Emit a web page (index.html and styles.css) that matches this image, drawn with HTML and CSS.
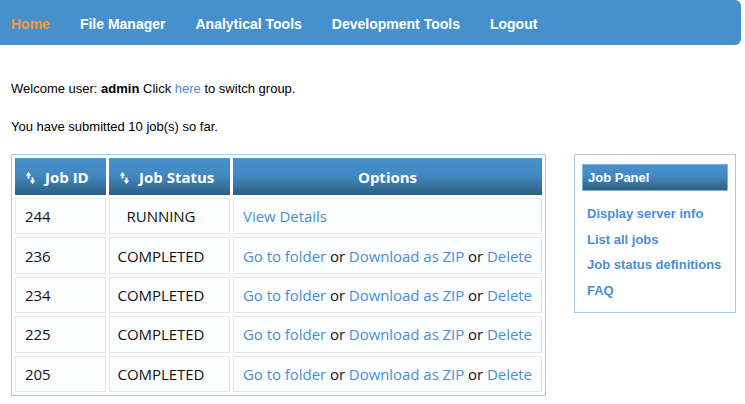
FILE: index.html
```html
<!DOCTYPE html>
<html>
<head>
<meta charset="utf-8">
<link rel="stylesheet" href="styles.css">
</head>
<body>
<nav class="topnav">
  <a class="nav-item active" href="#">Home</a>
  <a class="nav-item" href="#">File Manager</a>
  <a class="nav-item" href="#">Analytical Tools</a>
  <a class="nav-item" href="#">Development Tools</a>
  <a class="nav-item" href="#">Logout</a>
</nav>
<div class="content">
  <p class="welcome">Welcome user: <b>admin</b> Click <a href="#">here</a> to switch group.</p>
  <p class="submitted">You have submitted 10 job(s) so far.</p>
  <div class="main">
    <table class="jobs">
      <thead>
        <tr>
          <th class="col-id"><svg class="sort" width="9" height="12" viewBox="0 0 9 12"><path d="M2.5 0 L5.2 3.4 L3.5 3.4 L3.5 6.5 L1.5 6.5 L1.5 3.4 L-0.2 3.4 Z" fill="#fff"/><path d="M6.5 12 L9.2 8.6 L7.5 8.6 L7.5 5.5 L5.5 5.5 L5.5 8.6 L3.8 8.6 Z" fill="#fff"/></svg>Job ID</th>
          <th class="col-status"><svg class="sort" width="9" height="12" viewBox="0 0 9 12"><path d="M2.5 0 L5.2 3.4 L3.5 3.4 L3.5 6.5 L1.5 6.5 L1.5 3.4 L-0.2 3.4 Z" fill="#fff"/><path d="M6.5 12 L9.2 8.6 L7.5 8.6 L7.5 5.5 L5.5 5.5 L5.5 8.6 L3.8 8.6 Z" fill="#fff"/></svg>Job Status</th>
          <th class="col-opt">Options</th>
        </tr>
      </thead>
      <tbody>
        <tr><td>244</td><td class="status">RUNNING</td><td><a href="#">View Details</a></td></tr>
        <tr><td>236</td><td class="status">COMPLETED</td><td><a href="#">Go to folder</a> or <a href="#">Download as ZIP</a> or <a href="#">Delete</a></td></tr>
        <tr><td>234</td><td class="status">COMPLETED</td><td><a href="#">Go to folder</a> or <a href="#">Download as ZIP</a> or <a href="#">Delete</a></td></tr>
        <tr><td>225</td><td class="status">COMPLETED</td><td><a href="#">Go to folder</a> or <a href="#">Download as ZIP</a> or <a href="#">Delete</a></td></tr>
        <tr><td>205</td><td class="status">COMPLETED</td><td><a href="#">Go to folder</a> or <a href="#">Download as ZIP</a> or <a href="#">Delete</a></td></tr>
      </tbody>
    </table>
    <div class="panel">
      <div class="panel-head">Job Panel</div>
      <ul class="panel-links">
        <li><a href="#">Display server info</a></li>
        <li><a href="#">List all jobs</a></li>
        <li><a href="#">Job status definitions</a></li>
        <li><a href="#">FAQ</a></li>
      </ul>
    </div>
  </div>
</div>
</body>
</html>
```
FILE: styles.css
```css
html, body { margin: 0; padding: 0; background: #fff; }
body { font-family: "Liberation Sans", Arial, sans-serif; color: #000; }
a { text-decoration: none; color: #4a8fd6; }

.topnav {
  width: 741px;
  height: 45px;
  background: #4691cc;
  border-radius: 0 6px 6px 0;
  display: flex;
  align-items: center;
  gap: 30px;
  padding-left: 11px;
  box-sizing: border-box;
}
.nav-item {
  color: #fff;
  font-weight: bold;
  font-size: 14px;
  line-height: 16px;
  padding-top: 2px;
}
.nav-item.active { color: #f39a3c; }

.content { padding-left: 11px; }
.welcome, .submitted {
  margin: 0;
  font-size: 13px;
  line-height: 15px;
}
.welcome { padding-top: 36px; }
.welcome a { color: #4a8fd6; }
.submitted { padding-top: 23px; }

.main {
  display: flex;
  align-items: flex-start;
  margin-top: 20px;
}

.jobs {
  border: 1px solid #a9c9e2;
  border-collapse: separate;
  border-spacing: 3px;
  font-family: "Open Sans", "DejaVu Sans", sans-serif;
  font-size: 15px;
  letter-spacing: -0.05px;
}
.jobs th {
  height: 37px;
  padding: 0;
  color: #fff;
  font-weight: bold;
  font-size: 15px;
  background: linear-gradient(to bottom, #4791cd 0%, #4389c2 45%, #3a77a6 70%, #2c5f7f 100%);
  text-align: left;
  box-sizing: border-box;
  letter-spacing: 0;
}
.jobs th.col-id { width: 91px; padding-left: 11px; }
.jobs th.col-status { width: 121px; padding-left: 11px; }
.jobs th.col-opt { width: 309px; text-align: center; }
.sort { margin-right: 10px; vertical-align: -1px; }

.jobs td {
  height: 36.4px;
  box-sizing: border-box;
  border: 1px solid #e6e7e8;
  background: #fcfdfe;
  padding: 0 0 0 9px;
  color: #111;
  white-space: nowrap;
}
.jobs td.status { text-align: center; padding: 0 17px 0 0; }
.jobs td a { color: #4a8fd6; }

.panel {
  margin-left: 28px;
  width: 162px;
  box-sizing: border-box;
  border: 1px solid #a9c9e2;
  padding: 9px 7px 8px 7px;
}
.panel-head {
  height: 27px;
  box-sizing: border-box;
  border: 1px solid #7fb2dc;
  background: linear-gradient(to bottom, #4791cd 0%, #4389c2 45%, #3a77a6 70%, #2c5f7f 100%);
  color: #fff;
  font-weight: bold;
  font-size: 13px;
  line-height: 25px;
  padding-left: 5px;
}
.panel-links {
  list-style: none;
  margin: 10px 0 0 0;
  padding: 0 0 0 5px;
}
.panel-links li {
  font-size: 13px;
  font-weight: bold;
  line-height: 25.7px;
}
.panel-links a { color: #4a8fd6; }
```
